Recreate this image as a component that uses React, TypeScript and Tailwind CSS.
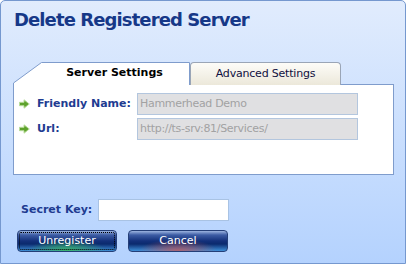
const font = "font-['DejaVu_Sans','Liberation_Sans',sans-serif]";

const Arrow = () => (
  <svg width="11" height="10" viewBox="0 0 11 10">
    <path
      d="M0.5 3.3 H5 V0.8 L10.3 5 L5 9.2 V6.7 H0.5 Z"
      fill="#5ea22c"
      stroke="#b9dc9c"
      strokeWidth="1"
      strokeLinejoin="round"
    />
  </svg>
);

const FieldRow = ({ label, value }: { label: string; value: string }) => (
  <div className="flex items-center">
    <div className="w-[23px] pl-[5px] flex items-center">
      <Arrow />
    </div>
    <div className="w-[100px] text-[11px] font-bold text-[#1f3c91]">{label}</div>
    <div className="w-[221px] h-[22px] border border-[#b3c6de] bg-[#e0e0e2] px-[2px] flex items-center text-[11px] text-[#a2a2a2] tracking-[-0.3px]">
      {value}
    </div>
  </div>
);

const Button = ({ label, focused }: { label: string; focused?: boolean }) => (
  <button
    className={
      "w-[100px] h-[22px] rounded-[4px] border border-[#243f78] text-white text-[11px] flex items-center justify-center " +
      (focused
        ? "bg-[radial-gradient(ellipse_40%_60%_at_50%_100%,rgba(60,190,90,0.85),transparent),linear-gradient(to_bottom,#9cb4e0,#3c5ca4_20%,#13307a_50%,#0b2a6e_65%,#3e8fd8)] outline-1 outline-dotted outline-black -outline-offset-[3px]"
        : "bg-[radial-gradient(ellipse_40%_60%_at_50%_100%,rgba(200,90,90,0.8),transparent),linear-gradient(to_bottom,#9cb4e0,#3c5ca4_20%,#13307a_50%,#0b2a6e_65%,#3e8fd8)]")
    }
  >
    {label}
  </button>
);

export default function App() {
  return (
    <div
      className={`${font} w-[406px] h-[264px] border border-[#7598cf] rounded-t-[5px] bg-gradient-to-b from-[#e1ecfd] to-[#b4d2fe] flex flex-col`}
    >
      <div className="pl-[13px] pt-[7px] leading-[24px] text-[18px] font-bold text-[#163888] tracking-[-0.9px]">
        Delete Registered Server
      </div>

      <div className="ml-[12px] mt-[30px] flex items-end -mb-px relative">
        <div className="relative w-[177px] h-[23px] flex items-center justify-center">
          <svg className="absolute inset-0" width="177" height="23" viewBox="0 0 177 23">
            <path d="M0.5 23 V21 L28.5 0.5 H176.5 V23 Z" fill="#ffffff" stroke="#7f9ccc" />
            <rect x="1" y="21" width="175" height="3" fill="#ffffff" />
          </svg>
          <span className="relative pl-[26px] text-[11px] font-bold text-black">
            Server Settings
          </span>
        </div>
        <div className="w-[151px] h-[23px] border border-[#9aa5b6] border-b-0 rounded-t-[4px] bg-gradient-to-b from-[#fdfcf8] to-[#ece8da] flex items-center justify-center text-[11px] text-[#101040] tracking-[-0.2px]">
          Advanced Settings
        </div>
      </div>

      <div className="ml-[12px] w-[381px] h-[91px] border border-[#7f9ccc] bg-white pt-[8px] flex flex-col gap-[3px]">
        <FieldRow label="Friendly Name:" value="Hammerhead Demo" />
        <FieldRow label="Url:" value="http://ts-srv:81/Services/" />
      </div>

      <div className="mt-[24px] ml-[20px] flex items-center">
        <div className="w-[77px] text-[11px] font-bold text-[#1f3c91]">Secret Key:</div>
        <div className="w-[131px] h-[22px] border border-[#a9c3e4] bg-white" />
      </div>

      <div className="mt-[9px] ml-[16px] flex gap-[11px]">
        <Button label="Unregister" focused />
        <Button label="Cancel" />
      </div>
    </div>
  );
}
